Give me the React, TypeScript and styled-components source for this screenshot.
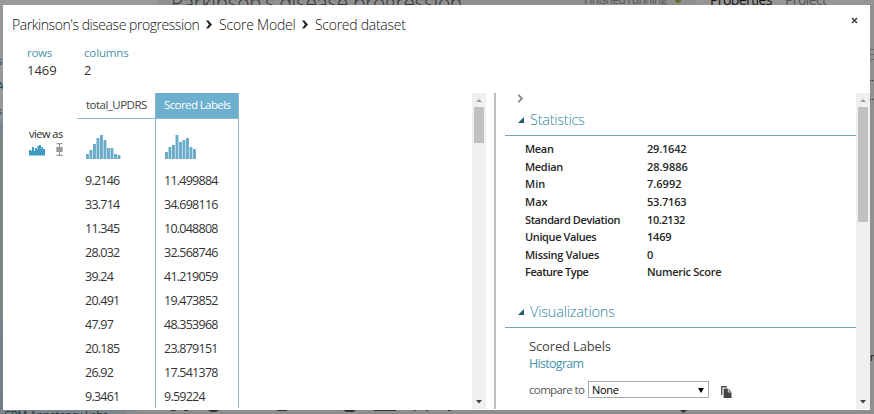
import React from "react";
import styled, { createGlobalStyle } from "styled-components";

const Global = createGlobalStyle`
  * { box-sizing: border-box; }
  body { margin: 0; background: #929292; overflow: hidden; }
  body, select { font-family: "Open Sans", "Noto Sans", sans-serif; }
`;

const Text = styled.span<{ $track?: number }>`
  display: block;
  white-space: nowrap;
  letter-spacing: ${(p) => p.$track ?? 0}px;
`;

/* Dimmed workspace that frames the dialog */
const Workspace = styled.div`
  width: 874px;
  height: 414px;
  display: grid;
  grid-template: 5px 405px 4px / 3px 867px 4px;
  background: #929292;
  overflow: hidden;
`;
const TopStrip = styled.div`
  grid-column: 1 / -1;
  display: flex;
  align-items: flex-start;
  overflow: hidden;
  padding-left: 158px;
  background: linear-gradient(90deg, #999 0 158px, #8f8f8f 158px 696px, #959595 696px);
`;
const BehindTitle = styled(Text)`
  width: 412px;
  padding-left: 13px;
  font-size: 21px;
  font-weight: 300;
  line-height: 24px;
  margin-top: -10px;
  color: #333;
`;
const BehindStatus = styled(Text)`
  width: 90px;
  padding-left: 14px;
  font-size: 12px;
  line-height: 16px;
  margin-top: -8px;
  color: #5a5a5a;
`;
const StatusDot = styled.i`
  width: 6px;
  height: 3px;
  margin: 0 29px 0 15px;
  border-radius: 0 0 3px 3px;
  background: #65702c;
`;
const BehindTab = styled(Text)<{ $active?: boolean }>`
  width: 75px;
  font-size: 14px;
  line-height: 18px;
  margin-top: -9px;
  color: ${(p) => (p.$active ? "#161616" : "#555")};
`;
const LeftStrip = styled.div`
  background: linear-gradient(#989898 0 110px, #75838a 122px, #7d8488 130px 300px, #737e84);
  color: #17465c;
  font-size: 11px;
  line-height: 25px;
  overflow: hidden;
  padding-top: 43px;
`;
const LeftGlyph = styled(Text)`
  margin-left: -3px;
`;
const RightStrip = styled.div`
  background: #909090;
  overflow: hidden;
  display: flex;
  flex-direction: column;
  color: #181818;
  font-size: 11px;
  line-height: 12px;
`;
const RightRules = styled.i`
  height: 11px;
  margin-top: 44px;
  border-top: 1px solid #696969;
  border-bottom: 1px solid #696969;
  background: linear-gradient(transparent 4px, #696969 4px 5px, transparent 5px);
`;
const Dots = styled.i<{ $gap: number }>`
  height: 1px;
  margin-top: ${(p) => p.$gap}px;
  background: repeating-linear-gradient(90deg, #222 0 1px, transparent 1px 2px);
`;
const RightGlyph = styled(Text)`
  margin-top: 251px;
`;
const BottomStrip = styled.div`
  grid-column: 1 / -1;
  display: flex;
  overflow: hidden;
  background: linear-gradient(90deg, #7c868a 0 127px, #848c90 127px 137px, #8d8d8d 137px);
`;
const BehindExperiment = styled(Text)`
  width: 169px;
  padding-left: 4px;
  font-size: 11px;
  line-height: 14px;
  margin-top: -2px;
  color: #17313d;
`;
const BottomArt = styled.svg`
  display: block;
`;

/* Dialog */
const Dialog = styled.main`
  background: #fff;
  color: #333;
  display: grid;
  grid-template-rows: 88px 316px;
  overflow: hidden;
`;
const Header = styled.header`
  padding: 8px 12px 0 9px;
`;
const TitleBar = styled.div`
  display: flex;
  justify-content: space-between;
  height: 22px;
`;
const Crumbs = styled.nav`
  display: flex;
  align-items: center;
  height: 22px;
  font-size: 14px;
  font-weight: 300;
  color: #111;
`;
const Crumb = styled(Text)<{ $w: number }>`
  width: ${(p) => p.$w}px;
`;
const CrumbArrow = styled.svg`
  width: 6px;
  height: 9px;
  margin: 0 7px 0 8px;
`;
const Close = styled.button`
  border: 0;
  padding: 0;
  height: 15px;
  background: none;
  display: flex;
  align-items: center;
`;
const Meta = styled.dl`
  display: flex;
  margin: 10px 0 0 15px;
`;
const MetaItem = styled.div`
  width: 57px;
`;
const MetaLabel = styled(Text)`
  color: #4a93ab;
  font-size: 11.5px;
  line-height: 16px;
`;
const MetaValue = styled(Text)`
  font-size: 13px;
  line-height: 18px;
`;
const Body = styled.div`
  display: grid;
  grid-template-columns: 74px 395px 14px 8px 3px 8px 351px 14px;
  min-height: 0;
`;
const ViewAs = styled.aside`
  padding: 33px 0 0 26px;
  font-size: 11px;
  line-height: 16px;
  color: #1f1f1f;
`;
const ViewIcons = styled.div`
  display: flex;
  align-items: center;
  gap: 11px;
  margin-top: 1px;
`;
const Table = styled.section`
  display: flex;
  overflow: hidden;
`;
const Column = styled.div<{ $selected?: boolean }>`
  width: ${(p) => (p.$selected ? 84 : 78)}px;
  border: solid ${(p) => (p.$selected ? "#8fb9cb" : "transparent")};
  border-width: 0 ${(p) => (p.$selected ? "1px" : 0)};
  height: 315px;
`;
const ColumnHead = styled.div<{ $selected?: boolean }>`
  height: 26px;
  padding: 0 8px 0 ${(p) => (p.$selected ? 8 : 9)}px;
  font-size: 11.5px;
  line-height: 24px;
  border-bottom: 1px solid #8fbccc;
  background: ${(p) => (p.$selected ? "#6cafce" : "#fff")};
  color: ${(p) => (p.$selected ? "#fff" : "#444")};
`;
const Chart = styled.svg`
  display: block;
  margin: 15px 0 9px 9px;
`;
const Cell = styled(Text)`
  padding-left: 8px;
  font-size: 12.5px;
  line-height: 24px;
  color: #333;
`;
const Scroll = styled.div`
  background: #f0f0f0;
  display: flex;
  flex-direction: column;
  align-items: center;
`;
const ScrollArrow = styled.svg`
  width: 14px;
  height: 14px;
  flex: none;
`;
const Thumb = styled.div<{ $h: number }>`
  width: 10px;
  height: ${(p) => p.$h}px;
  background: #c1c1c1;
  margin-bottom: auto;
`;
const Divider = styled.div`
  grid-column: 5;
  width: 2px;
  background: #bdbdbd;
`;
const Details = styled.section`
  grid-column: 7;
`;
const Collapse = styled.svg`
  display: block;
  margin: 1px 0 0 12px;
`;
const SectionTitle = styled.h2`
  display: flex;
  align-items: center;
  height: 33px;
  margin: 0;
  padding: 1px 0 0 13px;
  gap: 6px;
  border-bottom: 1px solid #6fa9b9;
  color: #2f86a2;
  font-size: 14.5px;
  font-weight: 300;
`;
const Stats = styled.dl`
  margin: 4px 0 14px;
  padding-left: 20px;
`;
const Stat = styled.div`
  display: grid;
  grid-template-columns: 122px 1fr;
  height: 17.65px;
  font-size: 11px;
  font-weight: 600;
  line-height: 17.65px;
  color: #262626;
`;
const Visual = styled.div`
  padding: 9px 0 0 24px;
`;
const VisualName = styled(Text)`
  font-size: 13px;
  line-height: 18px;
  color: #444;
`;
const VisualKind = styled(Text)`
  font-size: 12.5px;
  line-height: 18px;
  color: #4795a9;
`;
const Compare = styled.div`
  display: flex;
  align-items: center;
  margin-top: 8px;
  font-size: 11.5px;
  color: #555;
`;
const CompareLabel = styled(Text)`
  width: 59px;
`;
const Picker = styled.button`
  width: 121px;
  height: 17px;
  display: flex;
  align-items: center;
  justify-content: space-between;
  padding: 0 4px 0 3px;
  border: 1px solid #a9a9a9;
  background: #fff;
  color: #000;
  font: 11px "Open Sans", sans-serif;
`;
const Copy = styled.svg`
  margin: 4px 0 0 12px;
`;

type Bars = number[];
const Histogram = ({ bars }: { bars: Bars }) => (
  <Chart width="36" height="26">
    {bars.map((h, i) => (
      <rect key={i} x={i * 3.5} y={25 - h} width="2.9" height={h} fill="#6aabc9" />
    ))}
  </Chart>
);

const Arrow = ({ up }: { up?: boolean }) => (
  <ScrollArrow viewBox="0 0 14 14">
    <path d={up ? "M4 9 7 6 10 9z" : "M4 5H10L7 8.5z"} fill={up ? "#999" : "#444"} />
  </ScrollArrow>
);

const Scrollbar = ({ thumb }: { thumb: number }) => (
  <Scroll>
    <Arrow up />
    <Thumb $h={thumb} />
    <Arrow />
  </Scroll>
);

const Chevron = () => (
  <CrumbArrow viewBox="0 0 6 9">
    <path d="M0 .5H2.4L6 4.5 2.4 8.5H0L3 4.5z" fill="#222" />
  </CrumbArrow>
);

const Triangle = () => (
  <svg width="6" height="6">
    <path d="M6 0V6H0z" fill="#1c5b74" />
  </svg>
);

const updrs: string[] = [
  "9.2146", "33.714", "11.345", "28.032", "39.24",
  "20.491", "47.97", "20.185", "26.92", "9.3461",
];
const scored: string[] = [
  "11.499884", "34.698116", "10.048808", "32.568746", "41.219059",
  "19.473852", "48.353968", "23.879151", "17.541378", "9.59224",
];
const stats: [string, string, number, number][] = [
  ["Mean", "29.1642", -0.3, -0.2],
  ["Median", "28.9886", -0.3, 0],
  ["Min", "7.6992", 0, 0],
  ["Max", "53.7163", 0, -0.2],
  ["Standard Deviation", "10.2132", -0.4, -0.4],
  ["Unique Values", "1469", -0.38, -0.2],
  ["Missing Values", "0", -0.28, 0],
  ["Feature Type", "Numeric Score", -0.48, -0.28],
];

export default function App() {
  return (
    <>
      <Global />
      <Workspace>
        <TopStrip>
          <BehindTitle $track={-0.35}>Parkinson's disease progression</BehindTitle>
          <BehindStatus $track={-0.7}>Finished running</BehindStatus>
          <StatusDot />
          <BehindTab $active $track={-0.6}>Properties</BehindTab>
          <BehindTab $track={-0.6}>Project</BehindTab>
        </TopStrip>
        <LeftStrip>
          <LeftGlyph>s</LeftGlyph>
          <LeftGlyph>A</LeftGlyph>
          <LeftGlyph>s</LeftGlyph>
        </LeftStrip>
        <Dialog>
          <Header>
            <TitleBar>
              <Crumbs>
                <Crumb $w={186} $track={-0.45}>Parkinson's disease progression</Crumb>
                <Chevron />
                <Crumb $w={75} $track={-0.2}>Score Model</Crumb>
                <Chevron />
                <Crumb $w={90} $track={-0.27}>Scored dataset</Crumb>
              </Crumbs>
              <Close aria-label="Close">
                <svg width="7" height="7" viewBox="0 0 7 7">
                  <path d="M1 1 6 6M6 1 1 6" stroke="#444" strokeWidth="1.6" />
                </svg>
              </Close>
            </TitleBar>
            <Meta>
              <MetaItem>
                <MetaLabel $track={-0.3}>rows</MetaLabel>
                <MetaValue>1469</MetaValue>
              </MetaItem>
              <MetaItem>
                <MetaLabel $track={-0.15}>columns</MetaLabel>
                <MetaValue>2</MetaValue>
              </MetaItem>
            </Meta>
          </Header>
          <Body>
            <ViewAs>
              <Text $track={-0.5}>view as</Text>
              <ViewIcons>
                <svg width="16" height="12" viewBox="0 0 16 12">
                  <path d="M0 11.5V6H2V7H3V3H5V7H6V4H8V6H8.5V2H10V1H12V5H12.5V3H14V5H16V11.5z" fill="#3d9bc0" />
                </svg>
                <svg width="7" height="13" viewBox="0 0 7 13">
                  <path d="M.5 .7H6.5M.5 12.3H6.5M3.5 .7V12.3" stroke="#999" strokeWidth="1.2" />
                  <rect x=".3" y="4" width="6.4" height="5" fill="#999" />
                </svg>
              </ViewIcons>
            </ViewAs>
            <Table>
              <Column>
                <ColumnHead><Text $track={-0.52}>total_UPDRS</Text></ColumnHead>
                <Histogram bars={[5, 9, 15, 21, 24, 19, 11, 11, 5, 4]} />
                {updrs.map((v) => <Cell key={v} $track={-0.75}>{v}</Cell>)}
              </Column>
              <Column $selected>
                <ColumnHead $selected><Text $track={-0.6}>Scored Labels</Text></ColumnHead>
                <Histogram bars={[7, 12, 14, 24, 17, 19, 21, 12, 10]} />
                {scored.map((v) => <Cell key={v} $track={-0.75}>{v}</Cell>)}
              </Column>
            </Table>
            <Scrollbar thumb={36} />
            <Divider />
            <Details>
              <Collapse width="7" height="9" viewBox="0 0 7 9">
                <path d="M1.3 .8 5 4.5 1.3 8.2" fill="none" stroke="#888" strokeWidth="1.8" />
              </Collapse>
              <SectionTitle><Triangle /><Text $track={-0.25}>Statistics</Text></SectionTitle>
              <Stats>
                {stats.map(([k, v, a, b]) => (
                  <Stat key={k}>
                    <Text $track={a}>{k}</Text>
                    <Text $track={b}>{v}</Text>
                  </Stat>
                ))}
              </Stats>
              <SectionTitle><Triangle /><Text $track={-0.2}>Visualizations</Text></SectionTitle>
              <Visual>
                <VisualName $track={-0.15}>Scored Labels</VisualName>
                <VisualKind $track={-0.7}>Histogram</VisualKind>
                <Compare>
                  <CompareLabel $track={-0.65}>compare to</CompareLabel>
                  <Picker>
                    <Text $track={-0.3}>None</Text>
                    <svg width="6" height="6"><path d="M0 1H6L3 6z" fill="#000" /></svg>
                  </Picker>
                  <Copy width="11" height="12" viewBox="0 0 11 12">
                    <path d="M.7 9V.7H6" fill="none" stroke="#555" strokeWidth="1.4" />
                    <path d="M2.6 2.5H7.3L10.5 6V12H2.6z" fill="#444" />
                    <path d="M7.3 2.5V6H10.5" fill="none" stroke="#fff" strokeWidth=".8" />
                  </Copy>
                </Compare>
              </Visual>
            </Details>
            <Scrollbar thumb={115} />
          </Body>
        </Dialog>
        <RightStrip>
          <RightRules />
          <Dots $gap={20} />
          <Dots $gap={18} />
          <RightGlyph>r</RightGlyph>
        </RightStrip>
        <BottomStrip>
          <BehindExperiment $track={-0.2}>CRM Appetency Labs</BehindExperiment>
          <BottomArt width="540" height="4">
            <path d="M2 0H7L6 1H2zM15 0H19V1H15zM39 0H50L47 2H42zM108 0H118V1H108zM174 0H187L184 2H177zM205 0H227V1H205zM244 0H248L246 1zM256 0H260L258 1zM279 0H282V1H279zM511 0H518L514.5 3z" fill="#333" />
          </BottomArt>
        </BottomStrip>
      </Workspace>
    </>
  );
}
